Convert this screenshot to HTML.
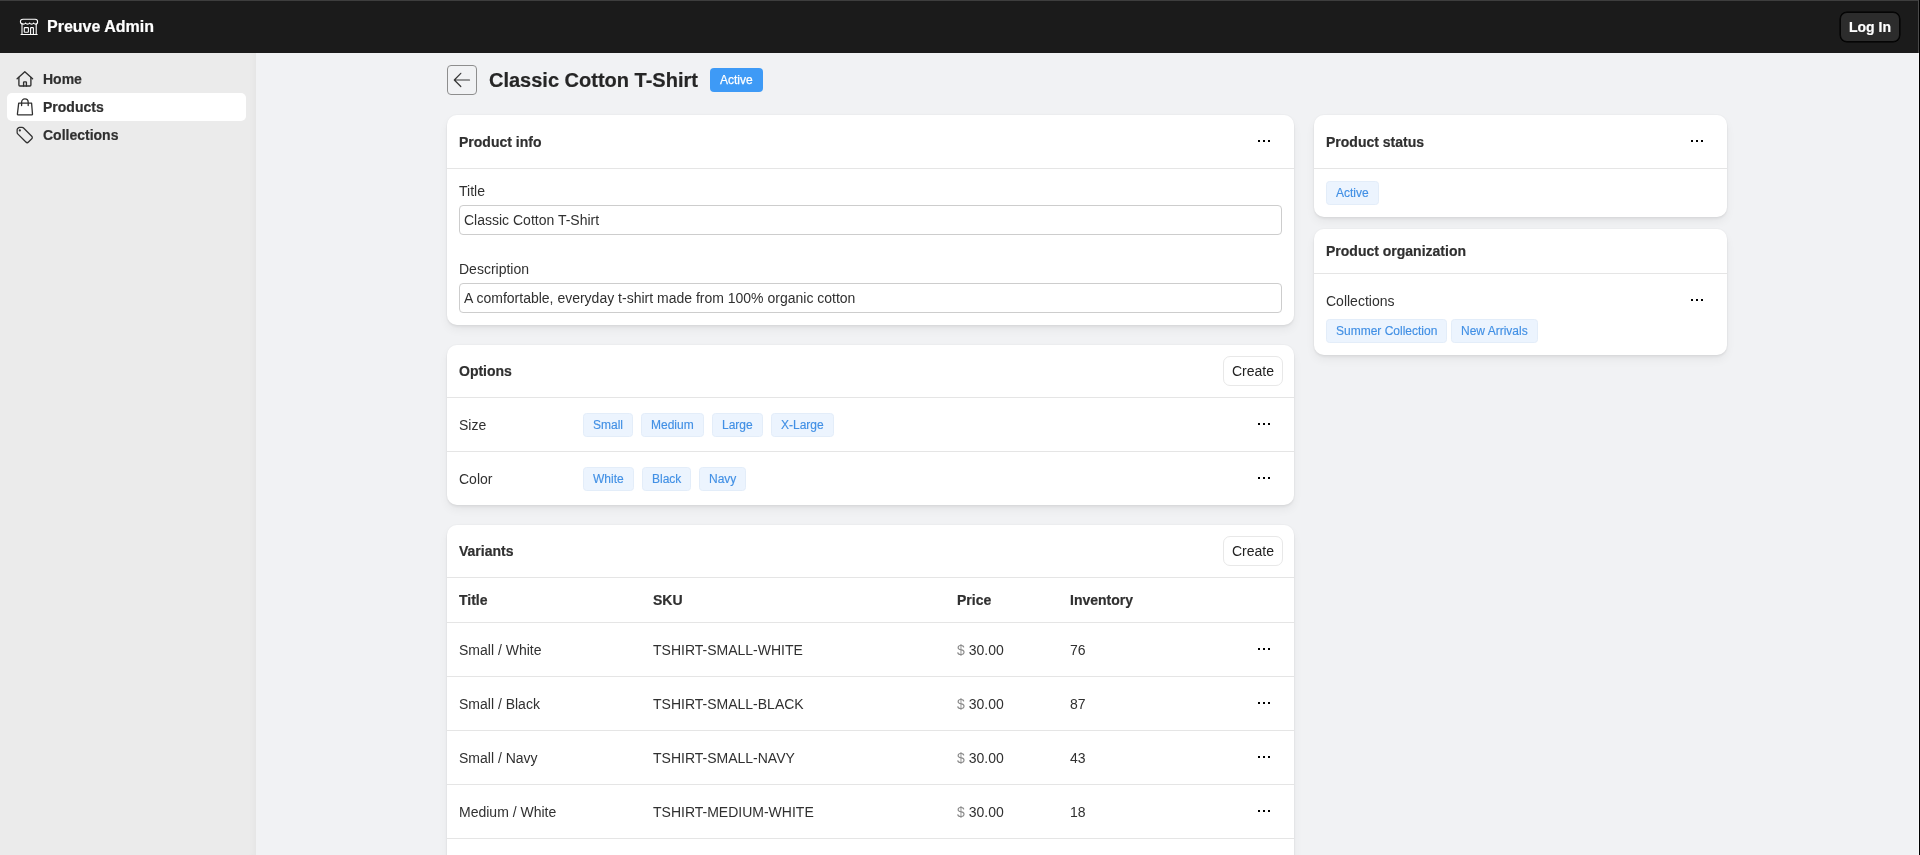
<!DOCTYPE html>
<html><head><meta charset="utf-8">
<style>
*{box-sizing:border-box;margin:0;padding:0}
html,body{width:1920px;height:855px;overflow:hidden}
body{font-family:"Liberation Sans",sans-serif;background:#f1f2f4;color:#303030;position:relative;font-size:14px}
.a{position:absolute}
.t{position:absolute;white-space:nowrap;line-height:20px;font-size:14px}
.b{font-weight:700;-webkit-text-stroke:0.2px currentColor}
#topline{left:0;top:0;width:1920px;height:1px;background:#3e3e3e}
#hdr{left:0;top:1px;width:1920px;height:52px;background:#1b1b1b}
#rb1{left:1918px;top:53px;width:1px;height:802px;background:#f8f8f8}#rb0{left:1918px;top:0;width:1px;height:53px;background:#4a4a4a}
#rb2{left:1919px;top:0;width:1px;height:855px;background:#000}
#side{left:0;top:53px;width:256px;height:802px;background:#ebebeb;box-shadow:inset -6px 0 6px -4px rgba(0,0,0,0.03)}
.card{position:absolute;background:#fff;border-radius:10px;box-shadow:0 0 0 1px rgba(0,0,0,0.02),0 2px 3px rgba(0,0,0,0.06),0 5px 10px rgba(0,0,0,0.05)}
.div{position:absolute;left:0;right:0;height:1px;background:#e5e5e5}
.dots{position:absolute;width:12px;height:2px}
.dots i{position:absolute;top:0;width:2px;height:2px;background:#000}
.dots i:nth-child(1){left:0}.dots i:nth-child(2){left:5px}.dots i:nth-child(3){left:10px}
.tag{position:absolute;height:24px;padding:0 9px;border:1px solid #e3edf9;background:#ecf4fe;border-radius:3.5px;color:#4290e5;font-size:12px;line-height:22px;white-space:nowrap;-webkit-text-stroke:0.15px currentColor}
.inp{position:absolute;height:30px;border:1px solid #cdcdcd;border-radius:4px;background:#fff}
.btn{position:absolute;height:30px;border:1px solid #e8e8e8;border-radius:7px;background:#fff;font-size:14px;line-height:28px;text-align:center;color:#222}
</style></head><body>
<div id="wrap" style="position:absolute;left:0;top:0;width:1920px;height:855px;will-change:transform">
<div class="a" id="topline"></div>
<div class="a" id="hdr"></div>
<div class="a" id="side"></div>

<!-- header -->
<svg class="a" style="left:16px;top:14px" width="26" height="26" viewBox="0 0 26 26" fill="none" stroke="#fff" stroke-width="1.1" stroke-linejoin="round" stroke-linecap="round">
  <path d="M7 5.2H19.2C20.8 5.2 21.6 6.4 21.6 7.8C21.6 9.2 20.8 10.1 19.7 10.1C18.7 10.1 18 9.6 17.6 9C17.2 9.6 16.5 10.1 15.6 10.1C14.7 10.1 14 9.6 13.6 9C13.2 9.6 12.5 10.1 11.6 10.1C10.7 10.1 10 9.6 9.6 9C9.2 9.6 8.5 10.1 7.5 10.1C5.8 10.1 4.4 9.2 4.4 7.8C4.4 6.4 5.3 5.2 7 5.2Z"/>
  <path d="M6 10.1V20.4M20.2 10.1V20.4M5 20.5H21.2"/>
  <rect x="8.3" y="13.6" width="4.1" height="4.6" rx="0.5"/>
  <path d="M14.6 20.4V14.1C14.6 13.8 14.8 13.6 15.1 13.6H16.9C17.2 13.6 17.4 13.8 17.4 14.1V20.4"/>
</svg>
<div class="t b" style="left:47px;top:17px;font-size:16px;color:#fff">Preuve Admin</div>
<div class="a" style="left:1840px;top:12px;width:60px;height:30px;border:1px solid #050505;border-radius:7px;background:#2c2c2c;box-shadow:0 0 0 0.5px #000"></div>
<div class="t b" style="left:1849px;top:17px;color:#fff">Log In</div>

<!-- sidebar -->
<div class="a" style="left:7px;top:93px;width:239px;height:28px;background:#fff;border-radius:5px"></div>
<svg class="a" style="left:12px;top:66px" width="26" height="26" viewBox="0 0 26 26" fill="none" stroke="#303030" stroke-width="1.35" stroke-linejoin="round" stroke-linecap="round">
  <path d="M5.1 12.7L12.8 5.7L20.6 12.7"/>
  <path d="M6.9 11.4V18.9C6.9 19.5 7.3 20 7.9 20H17.9C18.5 20 18.9 19.5 18.9 18.9V11.4"/>
  <path d="M11.6 20V16.3C11.6 16 11.9 15.8 12.2 15.8H13.9C14.2 15.8 14.4 16 14.4 16.3V20"/>
</svg>
<div class="t b" style="left:43px;top:69px">Home</div>
<svg class="a" style="left:12px;top:94px" width="26" height="26" viewBox="0 0 26 26" fill="none" stroke="#303030" stroke-width="1.3" stroke-linejoin="round" stroke-linecap="round">
  <path d="M6.7 9.2H19.6L20.5 20.2C20.5 20.6 20.2 20.8 19.8 20.8H6.1C5.7 20.8 5.4 20.6 5.4 20.2Z"/>
  <path d="M9.6 11.6V8.4C9.6 6.3 11 4.9 12.9 4.9C14.8 4.9 16.2 6.3 16.2 8.4V11.6"/>
</svg>
<div class="t b" style="left:43px;top:97px">Products</div>
<svg class="a" style="left:12px;top:122px" width="26" height="26" viewBox="0 0 26 26" fill="none" stroke="#303030" stroke-width="1.35" stroke-linejoin="round" stroke-linecap="round">
  <g transform="translate(0.3,1.0) scale(0.93)"><path d="M5.6 6.2L6.4 5.4C6.8 5 7.3 4.8 7.9 4.8H10.6C11.2 4.8 11.7 5 12.1 5.4L20.9 14.2C21.7 15 21.7 16.2 20.9 17L17.4 20.5C16.6 21.3 15.4 21.3 14.6 20.5L5.8 11.7C5.4 11.3 5.2 10.8 5.2 10.2V7.5C5.2 7 5.3 6.5 5.6 6.2Z"/>
  <circle cx="8.1" cy="8" r="0.5" fill="#303030"/></g>
</svg>
<div class="t b" style="left:43px;top:125px">Collections</div>

<!-- page title -->
<div class="a" style="left:447px;top:65px;width:30px;height:30px;border:1px solid #8e8e8e;border-radius:4px"></div>
<svg class="a" style="left:447px;top:65px" width="30" height="30" viewBox="0 0 30 30" fill="none" stroke="#383838" stroke-width="1.2" stroke-linecap="round" stroke-linejoin="round">
  <path d="M22.5 15H7.5M13.8 8.3L7.3 15L13.8 21.5"/>
</svg>
<div class="t b" style="left:489px;top:68px;font-size:20px;line-height:24px;color:#262626">Classic Cotton T-Shirt</div>
<div class="a" style="left:710px;top:68px;width:53px;height:24px;background:#3e9af6;border-radius:4px"></div>
<div class="t" style="left:720px;top:72px;font-size:12px;line-height:16px;color:#fff;-webkit-text-stroke:0.25px #fff">Active</div>

<!-- Product info card -->
<div class="card" style="left:447px;top:115px;width:847px;height:210px">
  <div class="t b" style="left:12px;top:17px">Product info</div>
  <div class="dots" style="left:811px;top:25px"><i></i><i></i><i></i></div>
  <div class="div" style="top:53px"></div>
  <div class="t" style="left:12px;top:66px">Title</div>
  <div class="inp" style="left:12px;top:90px;width:823px"></div>
  <div class="t" style="left:17px;top:95px">Classic Cotton T-Shirt</div>
  <div class="t" style="left:12px;top:144px">Description</div>
  <div class="inp" style="left:12px;top:168px;width:823px"></div>
  <div class="t" style="left:17px;top:173px">A comfortable, everyday t-shirt made from 100% organic cotton</div>
</div>

<!-- Options card -->
<div class="card" style="left:447px;top:345px;width:847px;height:160px">
  <div class="t b" style="left:12px;top:16px">Options</div>
  <div class="btn" style="left:776px;top:11px;width:60px">Create</div>
  <div class="div" style="top:52px"></div>
  <div class="t" style="left:12px;top:70px">Size</div>
  <div class="tag" style="left:136px;top:68px">Small</div>
  <div class="tag" style="left:194px;top:68px">Medium</div>
  <div class="tag" style="left:265px;top:68px">Large</div>
  <div class="tag" style="left:324px;top:68px">X-Large</div>
  <div class="dots" style="left:811px;top:78px"><i></i><i></i><i></i></div>
  <div class="div" style="top:106px"></div>
  <div class="t" style="left:12px;top:124px">Color</div>
  <div class="tag" style="left:136px;top:122px">White</div>
  <div class="tag" style="left:195px;top:122px">Black</div>
  <div class="tag" style="left:252px;top:122px">Navy</div>
  <div class="dots" style="left:811px;top:132px"><i></i><i></i><i></i></div>
</div>

<!-- Variants card -->
<div class="card" style="left:447px;top:525px;width:847px;height:400px">
  <div class="t b" style="left:12px;top:16px">Variants</div>
  <div class="btn" style="left:776px;top:11px;width:60px">Create</div>
  <div class="div" style="top:52px"></div>
  <div class="t b" style="left:12px;top:65px">Title</div>
  <div class="t b" style="left:206px;top:65px">SKU</div>
  <div class="t b" style="left:510px;top:65px">Price</div>
  <div class="t b" style="left:623px;top:65px">Inventory</div>
  <div class="div" style="top:97px"></div>

  <div class="t" style="left:12px;top:115px">Small / White</div>
  <div class="t" style="left:206px;top:115px">TSHIRT-SMALL-WHITE</div>
  <div class="t" style="left:510px;top:115px"><span style="color:#8a8a8a">$</span> 30.00</div>
  <div class="t" style="left:623px;top:115px">76</div>
  <div class="dots" style="left:811px;top:123px"><i></i><i></i><i></i></div>
  <div class="div" style="top:151px"></div>

  <div class="t" style="left:12px;top:169px">Small / Black</div>
  <div class="t" style="left:206px;top:169px">TSHIRT-SMALL-BLACK</div>
  <div class="t" style="left:510px;top:169px"><span style="color:#8a8a8a">$</span> 30.00</div>
  <div class="t" style="left:623px;top:169px">87</div>
  <div class="dots" style="left:811px;top:177px"><i></i><i></i><i></i></div>
  <div class="div" style="top:205px"></div>

  <div class="t" style="left:12px;top:223px">Small / Navy</div>
  <div class="t" style="left:206px;top:223px">TSHIRT-SMALL-NAVY</div>
  <div class="t" style="left:510px;top:223px"><span style="color:#8a8a8a">$</span> 30.00</div>
  <div class="t" style="left:623px;top:223px">43</div>
  <div class="dots" style="left:811px;top:231px"><i></i><i></i><i></i></div>
  <div class="div" style="top:259px"></div>

  <div class="t" style="left:12px;top:277px">Medium / White</div>
  <div class="t" style="left:206px;top:277px">TSHIRT-MEDIUM-WHITE</div>
  <div class="t" style="left:510px;top:277px"><span style="color:#8a8a8a">$</span> 30.00</div>
  <div class="t" style="left:623px;top:277px">18</div>
  <div class="dots" style="left:811px;top:285px"><i></i><i></i><i></i></div>
  <div class="div" style="top:313px"></div>
</div>

<!-- Product status -->
<div class="card" style="left:1314px;top:115px;width:413px;height:102px">
  <div class="t b" style="left:12px;top:17px">Product status</div>
  <div class="dots" style="left:377px;top:25px"><i></i><i></i><i></i></div>
  <div class="div" style="top:53px"></div>
  <div class="tag" style="left:12px;top:66px">Active</div>
</div>

<!-- Product organization -->
<div class="card" style="left:1314px;top:229px;width:413px;height:126px">
  <div class="t b" style="left:12px;top:12px">Product organization</div>
  <div class="div" style="top:44px"></div>
  <div class="t" style="left:12px;top:62px">Collections</div>
  <div class="dots" style="left:377px;top:70px"><i></i><i></i><i></i></div>
  <div class="tag" style="left:12px;top:90px">Summer Collection</div>
  <div class="tag" style="left:137px;top:90px">New Arrivals</div>
</div>

<div class="a" id="rb0"></div><div class="a" id="rb1"></div>
<div class="a" id="rb2"></div>
</div>
</body></html>
